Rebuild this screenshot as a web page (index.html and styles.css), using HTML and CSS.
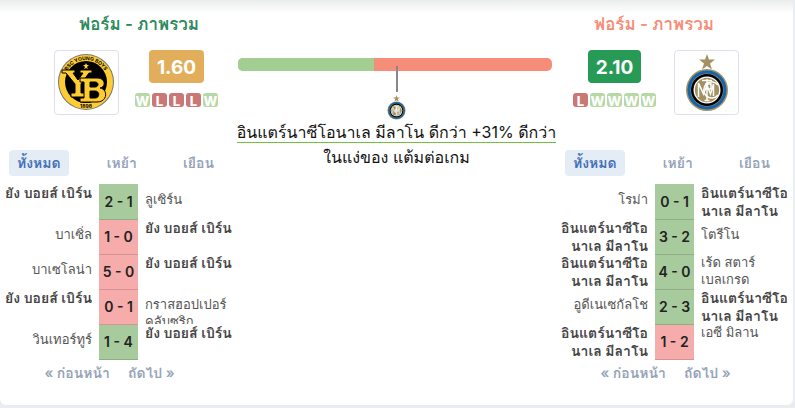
FILE: index.html
```html
<!DOCTYPE html>
<html lang="th">
<head>
<meta charset="utf-8">
<meta name="viewport" content="width=device-width, initial-scale=1">
<title>ฟอร์ม - ภาพรวม</title>
<link rel="stylesheet" href="styles.css">
</head>
<body>

<svg class="defs" aria-hidden="true">
	<symbol id="inter" viewBox="0 0 44 58">
		<path fill="#a39161" d="M22 0l2 5.600h6l-5 3.800 2 6-5-3.500-5 3.500 2-6-5-3.800h6z"/>
		<circle cx="22" cy="36" r="21" fill="#a39161"/>
		<circle cx="22" cy="36" r="19.500" fill="#1264ae"/>
		<circle cx="22" cy="36" r="16.500" fill="#a39161"/>
		<circle cx="22" cy="36" r="16" fill="#000"/>
		<circle cx="22" cy="36" r="13.500" fill="#fff"/>
		<circle cx="22" cy="36" r="12.200" fill="#a39161"/>
		<g fill="none" stroke="#fff" stroke-width="1.500">
			<path d="M13.500 43V29l5 11 3.500-9 3.500 9 3-10v12"/>
			<path d="M22 25v22M19.500 46.500h5M17 26.500h10M20 30h6v5h-6"/>
			<path d="M33 31a8 8 0 1 0 0 10"/>
		</g>
	</symbol>
</svg>

<div class="card">
	<div class="side home">
		<div class="summary">
			<h2>ฟอร์ม - ภาพรวม</h2>
			<div class="team">
				<a class="logo" href="#" aria-label="ยัง บอยส์ เบิร์น">
					<svg width="57" height="57" viewBox="0 0 57 57">
						<circle cx="28" cy="28" r="28" fill="#777"/>
						<circle cx="28" cy="28" r="27" fill="#fc3"/>
						<circle cx="28" cy="28" r="21" fill="#000"/>
						<path id="arcTop" fill="none" d="M6 28a22 22 0 0 1 44 0"/>
						<text class="crest"><textPath href="#arcTop" startOffset="50%" text-anchor="middle">BSC YOUNG BOYS</textPath></text>
						<text class="crest" x="28" y="54" text-anchor="middle">1898</text>
						<path fill="#fc3" d="M28 9l1 2h2l-2 2 1 2-2-1-2 1 1-2-2-2h2z"/>
						<g fill="#fc3" stroke="#000" stroke-width="1">
							<path d="M4 16h13v3h-2l5 7 5-7h-3v-3h12v3h-3l-8 11v9h4v4H13v-4h4v-9L8 19H4z"/>
							<path fill-rule="evenodd" d="M22 24h17c9 0 9 9 3 10 8 1 8 14-3 14H22v-4h4V28h-4zM32 28v5h5c4 0 4-5 0-5zM32 37v7h5c5 0 5-7 0-7z"/>
						</g>
					</svg>
				</a>
				<div class="stats">
					<span class="odds mid">1.60</span>
					<div class="form"><i class="w">W</i><i class="l">L</i><i class="l">L</i><i class="l">L</i><i class="w">W</i></div>
				</div>
			</div>
		</div>
		<div class="tabs">
			<button type="button" class="active">ทั้งหมด</button>
			<button type="button">เหย้า</button>
			<button type="button">เยือน</button>
		</div>
		<table class="results">
			<tr><td class="top"><div><b>ยัง บอยส์ เบิร์น</b></div></td><td class="score win">2 - 1</td><td><div>ลูเซิร์น</div></td></tr>
			<tr><td><div>บาเซิ่ล</div></td><td class="score loss">1 - 0</td><td class="top"><div><b>ยัง บอยส์ เบิร์น</b></div></td></tr>
			<tr><td><div>บาเซโลน่า</div></td><td class="score loss">5 - 0</td><td class="top"><div><b>ยัง บอยส์ เบิร์น</b></div></td></tr>
			<tr><td class="top"><div><b>ยัง บอยส์ เบิร์น</b></div></td><td class="score loss">0 - 1</td><td><div>กราสฮอปเปอร์<br>คลับซูริก</div></td></tr>
			<tr><td><div>วินเทอร์ทูร์</div></td><td class="score win">1 - 4</td><td class="top"><div><b>ยัง บอยส์ เบิร์น</b></div></td></tr>
		</table>
		<div class="pager"><a href="#">« ก่อนหน้า</a><a href="#">ถัดไป »</a></div>
	</div>

	<div class="compare">
		<div class="bar"><div class="bar-home" style="width:43.3%"></div></div>
		<div class="stem"></div>
		<svg class="mark" width="19" height="25"><use href="#inter"/></svg>
		<p><span>อินแตร์นาซีโอนาเล มีลาโน ดีกว่า +31% ดีกว่า</span><br>ในแง่ของ แต้มต่อเกม</p>
	</div>

	<div class="side away">
		<div class="summary">
			<h2>ฟอร์ม - ภาพรวม</h2>
			<div class="team">
				<div class="stats">
					<span class="odds good">2.10</span>
					<div class="form"><i class="l">L</i><i class="w">W</i><i class="w">W</i><i class="w">W</i><i class="w">W</i></div>
				</div>
				<a class="logo" href="#" aria-label="อินแตร์นาซีโอนาเล มีลาโน">
					<svg width="44" height="58"><use href="#inter"/></svg>
				</a>
			</div>
		</div>
		<div class="tabs">
			<button type="button" class="active">ทั้งหมด</button>
			<button type="button">เหย้า</button>
			<button type="button">เยือน</button>
		</div>
		<table class="results">
			<tr><td><div>โรม่า</div></td><td class="score win">0 - 1</td><td class="top"><div><b>อินแตร์นาซีโอ<br>นาเล มีลาโน</b></div></td></tr>
			<tr><td class="top"><div><b>อินแตร์นาซีโอ<br>นาเล มีลาโน</b></div></td><td class="score win">3 - 2</td><td><div>โตรีโน</div></td></tr>
			<tr><td class="top"><div><b>อินแตร์นาซีโอ<br>นาเล มีลาโน</b></div></td><td class="score win">4 - 0</td><td class="top"><div>เร้ด สตาร์<br>เบลเกรด</div></td></tr>
			<tr><td><div>อูดีเนเซกัลโช</div></td><td class="score win">2 - 3</td><td class="top"><div><b>อินแตร์นาซีโอ<br>นาเล มีลาโน</b></div></td></tr>
			<tr><td class="top"><div><b>อินแตร์นาซีโอ<br>นาเล มีลาโน</b></div></td><td class="score loss">1 - 2</td><td class="top"><div>เอซี มิลาน</div></td></tr>
		</table>
		<div class="pager"><a href="#">« ก่อนหน้า</a><a href="#">ถัดไป »</a></div>
	</div>
</div>

</body>
</html>
```
FILE: styles.css
```css
* {
	box-sizing:border-box;
	margin:0;
	padding:0;
}
body {
	background:#E9ECF1;
	color:#222;
	font:14px/17px Inter, Tahoma, Loma, "Noto Sans Thai Looped", Waree, sans-serif;
}
a {
	text-decoration:none;
}
.defs {
	display:block;
	width:0;
	height:0;
}
.card {
	display:grid;
	grid-template-columns:237px minmax(0, 1fr) 237px;
	margin-right:2px;
	padding-bottom:23px;
	border-radius:0 0 6px 6px;
	background:linear-gradient(#EBEDED, #FFF 14px);
}

/* team summary */
.summary {
	padding-top:14px;
}
.home .summary {
	margin:0 13px 0 54px;
}
.away .summary {
	margin:0 54px 0 13px;
}
h2 {
	font-size:17px;
	font-weight:600;
	line-height:20px;
	text-align:center;
	white-space:nowrap;
}
.home h2 {
	color:#2D8A5B;
}
.away h2 {
	color:#F68D79;
}
.team {
	display:flex;
	gap:16px;
	margin-top:16px;
}
.away .team {
	justify-content:flex-end;
	gap:18px;
}
.logo {
	display:flex;
	align-items:center;
	justify-content:center;
	width:65px;
	height:65px;
	border:1px solid #DEDFEA;
	border-radius:4px;
	background:#FFF;
}
.crest {
	font:bold 5px Inter, sans-serif;
}
.stats {
	display:flex;
	flex-direction:column;
	align-items:center;
}
.odds {
	height:33px;
	padding:0 8px;
	border-radius:4px;
	color:#FFF;
	font-size:19px;
	font-weight:700;
	line-height:35px;
}
.mid {
	background:#E3AE5C;
}
.good {
	background:#279B55;
}
.form {
	display:flex;
	gap:2px;
	margin-top:10px;
}
.form i {
	width:15px;
	height:14px;
	border-radius:3px;
	color:#FFF;
	font-size:13px;
	font-style:normal;
	font-weight:800;
	line-height:16px;
	text-align:center;
}
.w {
	background:#B5D8A5;
}
.l {
	background:#C97777;
}

/* centre bar */
.compare {
	display:flex;
	flex-direction:column;
	align-items:center;
	padding-top:58px;
}
.bar {
	align-self:stretch;
	height:13px;
	margin:0 4px 0 1px;
	border-radius:5px;
	background:#F68D79;
	overflow:hidden;
}
.bar-home {
	height:100%;
	background:#A2CE91;
}
.stem {
	position:relative;
	width:2px;
	height:26px;
	margin-top:-5px;
	background:#888;
}
.mark {
	margin-top:3px;
}
.compare p {
	color:#111;
	font-size:16px;
	line-height:25px;
	text-align:center;
	white-space:nowrap;
}
.compare span {
	border-bottom:1px solid #72BF44;
}

/* result lists */
.tabs {
	display:flex;
	justify-content:space-between;
	margin-top:35px;
	padding:0 15px 0 9px;
}
.tabs button {
	height:26px;
	padding:0 8px;
	border:0;
	border-radius:4px;
	background:none;
	color:#94A3B8;
	font:inherit;
	font-weight:600;
	line-height:26px;
	cursor:pointer;
}
.tabs .active {
	background:#E4ECF6;
	color:#4470B9;
}
.results {
	width:100%;
	margin-top:8px;
	border-collapse:collapse;
	table-layout:fixed;
}
.results td {
	height:35px;
	padding:0 7px 0 0;
	color:#555;
	font-size:13px;
	text-align:right;
	vertical-align:top;
	white-space:nowrap;
}
.results td:last-child {
	padding:0 0 0 7px;
	text-align:left;
}
.results div {
	height:35px;
	padding-top:7px;
	overflow:hidden;
}
.results .top div {
	padding-top:0;
}
.results b {
	color:#444;
	font-size:14px;
	font-weight:600;
}
.results .score {
	width:39px;
	padding:0;
	border-bottom:1px solid #8FAF86;
	color:#222;
	font-size:14px;
	font-weight:600;
	text-align:center;
	vertical-align:middle;
}
.results .win {
	background:#A8CB9E;
}
.results .loss {
	border-color:#D59492;
	background:#F6ACAA;
}
.pager {
	display:flex;
	justify-content:center;
	gap:18px;
	margin-top:3px;
	padding-right:18px;
}
.pager a {
	color:#94A3B8;
	font-size:14px;
	font-weight:600;
	line-height:19px;
}
```
